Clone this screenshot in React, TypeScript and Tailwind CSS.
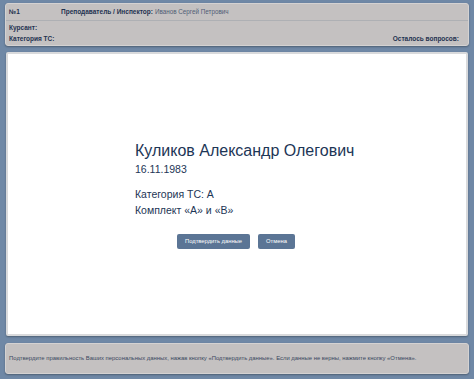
export default function App() {
  return (
    <div className="w-[474px] h-[379px] bg-[#6f88a6] flex flex-col overflow-hidden font-['Liberation_Sans',Arial,sans-serif]">
      {/* header */}
      <div className="mx-[5px] mt-[3px] h-[43px] rounded-[3px] bg-[#c4c1c1] border border-[#d4d2d2] shadow-[0_1px_2px_rgba(0,0,0,0.3)] flex flex-col text-[6.5px] text-[#1f3250]">
        <div className="h-[17px] flex items-center px-[3px] border-b border-[#aeb0b4]">
          <span className="font-bold w-[52px]">№1</span>
          <span className="font-bold">Преподаватель / Инспектор:</span>
          <span className="ml-[2px] text-[#4f5d75] text-[6.3px]">Иванов Сергей Петрович</span>
        </div>
        <div className="h-[11px] flex items-center px-[3px] mt-[1px]">
          <span className="font-bold">Курсант:</span>
        </div>
        <div className="h-[11px] flex items-center justify-between px-[3px]">
          <span className="font-bold">Категория ТС:</span>
          <span className="font-bold mr-[6px]">Осталось вопросов:</span>
        </div>
      </div>

      {/* main */}
      <div className="mx-[6px] mt-[6px] h-[284px] bg-white border-2 border-[#d9dadc] rounded-[2px] shadow-[0_1px_2px_rgba(0,0,0,0.3)] pl-[127px] pt-[87px] text-[#1d3656]">
        <div className="text-[16px] leading-[20px]">Куликов Александр Олегович</div>
        <div className="text-[10.5px] leading-[16px]">16.11.1983</div>
        <div className="text-[10.5px] leading-[16px] mt-[9px]">Категория ТС: А</div>
        <div className="text-[10.5px] leading-[16px]">Комплект «А» и «В»</div>
        <div className="flex gap-[8px] ml-[42px] mt-[16px]">
          <button className="h-[15px] w-[73px] rounded-[2px] bg-[#5b7595] text-white text-[5.8px]">
            Подтвердить данные
          </button>
          <button className="h-[15px] w-[37px] rounded-[2px] bg-[#5b7595] text-white text-[5.8px]">
            Отмена
          </button>
        </div>
      </div>

      {/* footer */}
      <div className="mx-[5px] mt-[7px] h-[31px] rounded-[3px] bg-[#c4c1c1] border border-[#d4d2d2] shadow-[0_1px_2px_rgba(0,0,0,0.3)] flex items-center px-[3px] text-[5.9px] text-[#3a4860] whitespace-nowrap">
        Подтвердите правильность Ваших персональных данных, нажав кнопку «Подтвердить данные». Если данные не верны, нажмите кнопку «Отмена».
      </div>
    </div>
  );
}
